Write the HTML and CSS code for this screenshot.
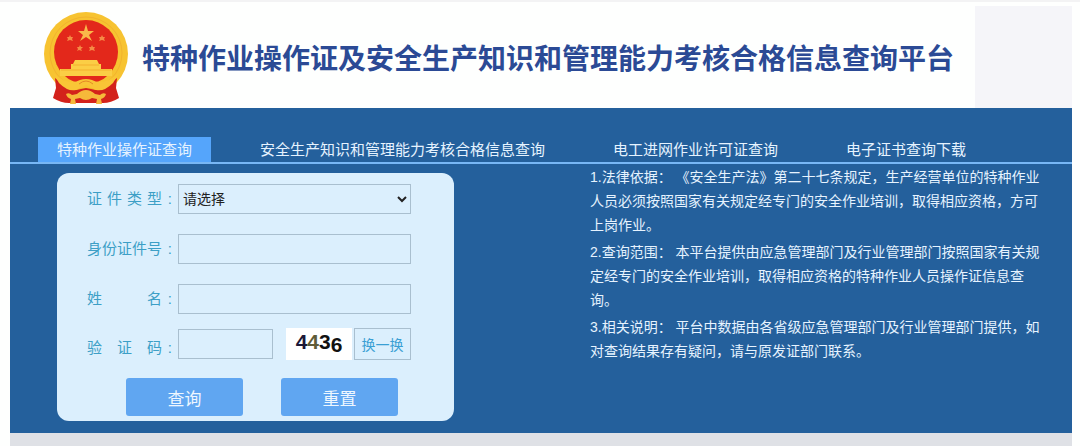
FILE: index.html
```html
<!DOCTYPE html>
<html lang="zh-CN">
  <head>
    <meta charset="UTF-8" />
    <meta name="viewport" content="width=device-width, initial-scale=1.0" />
    <title>特种作业操作证及安全生产知识和管理能力考核合格信息查询平台</title>

    <link rel="stylesheet" href="styles.css">
  </head>
  <body>
    <header class="header">
      <svg class="emblem" viewBox="0 0 86 92" aria-hidden="true">
        <circle cx="43" cy="42" r="42" fill="#f7c331" />
        <circle cx="43" cy="41" r="36" fill="none" stroke="#f2b32e" stroke-width="1" />
        <circle cx="43" cy="40" r="32" fill="#e3281b" />
        <!-- stars -->
        <path d="M43 12 L45 19 L51 19 L46 23 L49 29 L43 25 L37 29 L40 23 L35 19 L41 19 Z" fill="#f9b94a" />
        <g fill="#f58b45">
          <path d="M27 23 l1 2 h2 l-1 2 l1 2 l-3 -1 l-3 1 l1 -2 l-1 -2 h2 Z" />
          <path d="M59 23 l1 2 h2 l-1 2 l1 2 l-3 -1 l-3 1 l1 -2 l-1 -2 h2 Z" />
          <path d="M37 33 l1 2 h2 l-2 2 l1 2 l-3 -1 l-2 1 l1 -2 l-1 -2 h2 Z" />
          <path d="M49 33 l1 2 h2 l-1 2 l1 2 l-3 -1 l-3 1 l1 -2 l-1 -2 h2 Z" />
        </g>
        <!-- gate -->
        <path d="M32 48 H54 L56 52 H58 V57 H69 V64 H17 V57 H28 V52 H30 Z" fill="#fbce45" />
        <path d="M30 53 H56 M18 58 H68" stroke="#f3b02f" stroke-width="1" />
        <!-- drapes, ribbon and cog -->
        <path d="M12 66 Q20 73 33 78 L43 76 L53 78 Q66 73 74 66 L73 76 L76 86 Q68 91 60 91 H26 Q18 91 10 86 L13 76 Z" fill="#d3221b" />
        <path d="M10 61 L20 68 Q30 72 37 68 Q43 66 49 68 Q56 72 66 68 L76 61 L70 71 Q61 80 53 78 L43 73 L33 78 Q25 80 16 71 Z" fill="#f9c536" />
        <path d="M36 72 Q43 66 50 72" fill="none" stroke="#e58a27" stroke-width="1" />
        <path d="M34 82 Q43 74 52 82 L57 83 Q60 80 63 82 Q62 86 58 87 L59 92 H53 L54 87 L49 86 Q43 90 37 86 L32 87 L33 92 H27 L28 87 Q24 86 23 82 Q26 80 29 83 Z" fill="#f6b93a" />
      </svg>
      <h1 class="title">特种作业操作证及安全生产知识和管理能力考核合格信息查询平台</h1>
      <div class="header-side"></div>
    </header>

    <main class="main">
      <nav class="tabs">
        <a class="tab active" href="#">特种作业操作证查询</a>
        <a class="tab" href="#">安全生产知识和管理能力考核合格信息查询</a>
        <a class="tab" href="#">电工进网作业许可证查询</a>
        <a class="tab" href="#">电子证书查询下载</a>
      </nav>

      <div class="content">
        <form class="query-form">
          <div class="row">
            <label class="label" for="card-type"><span class="label-text">证件类型</span>:</label>
            <select class="field" id="card-type">
              <option>请选择</option>
            </select>
          </div>
          <div class="row">
            <label class="label" for="card-no"><span class="label-text">身份证件号</span>:</label>
            <input class="field" id="card-no" type="text" />
          </div>
          <div class="row">
            <label class="label" for="name"><span class="label-text">姓名</span>:</label>
            <input class="field" id="name" type="text" />
          </div>
          <div class="row row-code">
            <label class="label" for="code"><span class="label-text">验证码</span>:</label>
            <input class="field" id="code" type="text" />
            <div class="captcha"><span class="navy">4</span><span class="olive">4</span><span>3</span><span class="low">6</span></div>
            <button class="refresh" type="button">换一换</button>
          </div>
          <div class="actions">
            <button class="btn" type="submit">查询</button>
            <button class="btn" type="reset">重置</button>
          </div>
        </form>

        <section class="info">
          <p>1.法律依据： 《安全生产法》第二十七条规定，生产经营单位的特种作业人员必须按照国家有关规定经专门的安全作业培训，取得相应资格，方可上岗作业。</p>
          <p>2.查询范围： 本平台提供由应急管理部门及行业管理部门按照国家有关规定经专门的安全作业培训，取得相应资格的特种作业人员操作证信息查询。</p>
          <p>3.相关说明： 平台中数据由各省级应急管理部门及行业管理部门提供，如对查询结果存有疑问，请与原发证部门联系。</p>
        </section>
      </div>
    </main>

    <footer class="footer"></footer>
  </body>
</html>
```
FILE: styles.css
```css
* {
  margin: 0;
  padding: 0;
  box-sizing: border-box;
}

body {
  min-height: 100vh;
  display: flex;
  flex-direction: column;
  padding: 0 8px 0 10px;
  border-top: 2px solid #f3f3f4;
  background: #fefffe;
  font-family: "Liberation Sans", "Noto Sans CJK SC", sans-serif;
  font-size: 14px;
}

button,
input,
select {
  font-family: inherit;
}

/* header */
.header {
  display: flex;
  align-items: flex-start;
  padding-left: 33px;
}

.emblem {
  width: 86px;
  height: 92px;
  margin-top: 10px;
}

.title {
  flex: 1;
  padding: 38px 0 0 13px;
  color: #2b4a95;
  font-size: 28px;
  line-height: 40px;
  white-space: nowrap;
}

.header-side {
  width: 97px;
  height: 102px;
  margin-top: 4px;
  background: #f5f5f9;
}

/* main */
.main {
  padding: 29px 0 12px;
  background: #24609c;
}

.tabs {
  display: flex;
  padding-left: 28px;
  border-bottom: 2px solid #78b7f5;
}

.tab {
  padding: 0 19px;
  color: #e6f3ff;
  font-size: 15px;
  line-height: 25px;
  text-decoration: none;
}

.tab + .tab {
  margin-left: 30px;
}

.tab.active {
  background: #55a5fb;
}

.content {
  display: flex;
  justify-content: space-between;
  align-items: flex-start;
  padding: 0 22px 0 47px;
}

/* query form */
.query-form {
  width: 397px;
  margin-top: 9px;
  padding: 11px 30px 5px;
  border-radius: 12px;
  background: #dbeffd;
}

.row {
  display: flex;
  align-items: center;
  margin-bottom: 20px;
}

.label {
  display: flex;
  justify-content: space-between;
  align-items: baseline;
  width: 85px;
  margin-right: 6px;
  color: #3d9fc6;
  font-size: 15px;
  line-height: 20px;
}

.label-text {
  width: 75px;
  text-align: justify;
  text-align-last: justify;
}

.field {
  width: 233px;
  height: 30px;
  padding: 0 4px;
  border: 1px solid #a9bfcf;
  border-radius: 0;
  background: #dbeffd;
  color: #222;
  font-size: 14px;
}

select.field {
  padding: 0;
}

.row-code {
  margin: -6px 0 18px;
}

.row-code .label {
  padding-top: 8px;
}

.row-code .field {
  width: 95px;
}

.captcha {
  display: flex;
  justify-content: center;
  width: 66px;
  height: 32px;
  margin: 0 2px 0 13px;
  background: #fff;
  color: #111;
  font-size: 21px;
  font-weight: bold;
  line-height: 28px;
}

.captcha .navy {
  color: #1b1838;
}

.captcha .olive {
  color: #5f5c38;
}

.captcha .low {
  padding-top: 3px;
}

.refresh {
  width: 57px;
  height: 32px;
  border: 1px solid #a9bfcf;
  background: #dbeffd;
  color: #3a9fd4;
  font-size: 14px;
}

.actions {
  display: flex;
  gap: 38px;
  padding-left: 39px;
}

.btn {
  width: 117px;
  height: 38px;
  border: 0;
  border-radius: 3px;
  background: #60a6f1;
  color: #eef7ff;
  font-size: 17px;
}

/* notes */
.info {
  width: 460px;
  padding-top: 1px;
  color: #e6f3ff;
  line-height: 24px;
}

.info p {
  margin-bottom: 3px;
}

.footer {
  flex: 1;
  min-height: 13px;
  background: #dfe1e6;
}
```
